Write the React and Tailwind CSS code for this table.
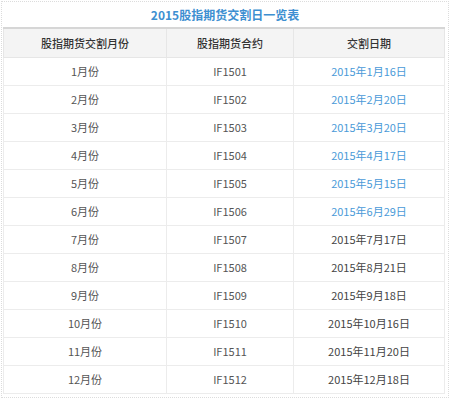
import React from "react";

const rows = [
  ["1月份", "IF1501", "2015年1月16日", true],
  ["2月份", "IF1502", "2015年2月20日", true],
  ["3月份", "IF1503", "2015年3月20日", true],
  ["4月份", "IF1504", "2015年4月17日", true],
  ["5月份", "IF1505", "2015年5月15日", true],
  ["6月份", "IF1506", "2015年6月29日", true],
  ["7月份", "IF1507", "2015年7月17日", false],
  ["8月份", "IF1508", "2015年8月21日", false],
  ["9月份", "IF1509", "2015年9月18日", false],
  ["10月份", "IF1510", "2015年10月16日", false],
  ["11月份", "IF1511", "2015年11月20日", false],
  ["12月份", "IF1512", "2015年12月18日", false],
];

export default function App() {
  return (
    <div
      className="w-[451px] h-[400px] bg-white pt-px pl-px"
      style={{ fontFamily: '"Noto Sans CJK SC", "Noto Sans", sans-serif' }}
    >
      <div className="w-[448px] h-[397px] border border-dotted border-[#dcdcdc]">
        <div className="h-[25px] flex items-center justify-center text-[12px] font-bold text-[#3d8fd1]">
          2015股指期货交割日一览表
        </div>
        <table className="ml-px w-[441px] border-collapse table-fixed text-[11px]">
          <colgroup>
            <col className="w-[163px]" />
            <col className="w-[127px]" />
            <col className="w-[151px]" />
          </colgroup>
          <thead>
            <tr className="h-[29px] bg-[#f4f4f4] border-t-2 border-[#d6d6d6]">
              <th className="border border-[#e6e6e6] border-t-[#d6d6d6] border-t-2 font-medium text-[#333] text-center">
                股指期货交割月份
              </th>
              <th className="border border-[#e6e6e6] border-t-[#d6d6d6] border-t-2 font-medium text-[#333] text-center">
                股指期货合约
              </th>
              <th className="border border-[#e6e6e6] border-t-[#d6d6d6] border-t-2 font-medium text-[#333] text-center">
                交割日期
              </th>
            </tr>
          </thead>
          <tbody>
            {rows.map(([m, c, d, blue]) => (
              <tr key={c} className="h-[28px]">
                <td className="border border-[#ececec] text-center text-[#555]">{m}</td>
                <td className="border border-[#ececec] text-center text-[#555]">{c}</td>
                <td
                  className={
                    "border border-[#ececec] text-center " +
                    (blue ? "text-[#4a9ad8]" : "text-[#444]")
                  }
                >
                  {d}
                </td>
              </tr>
            ))}
          </tbody>
        </table>
      </div>
    </div>
  );
}
